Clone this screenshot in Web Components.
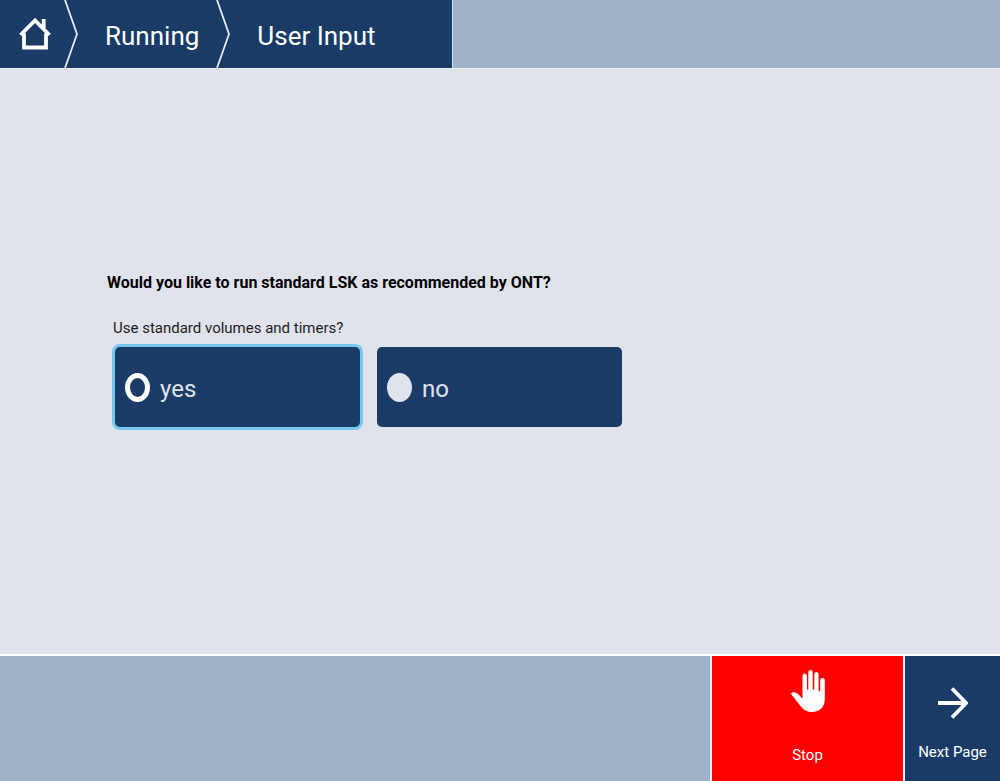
<!DOCTYPE html>
<html lang="en">
<head>
<meta charset="utf-8">
<title>User Input</title>
<style>
  html, body { margin: 0; height: 100%; }
  body { font-family: Roboto, "Noto Sans", sans-serif; }
</style>
</head>
<body>
<run-screen>
  <crumb-bar slot="header">
    <crumb-item home></crumb-item>
    <crumb-item>Running</crumb-item>
    <crumb-item current>User Input</crumb-item>
  </crumb-bar>
  <question-form heading="Would you like to run standard LSK as recommended by ONT?" prompt="Use standard volumes and timers?" options="yes,no" value="yes"></question-form>
  <action-bar slot="footer">
    <action-button kind="stop">Stop</action-button>
    <action-button kind="next">Next Page</action-button>
  </action-bar>
</run-screen>
<script>
  class BaseElement extends HTMLElement {
    connectedCallback() {
      if (this.shadowRoot) return;
      this.attachShadow({ mode: 'open' }).innerHTML = this.render();
    }
  }

  class RunScreen extends BaseElement {
    render() {
      return `<style>
        :host { display: flex; flex-direction: column; min-height: 100vh; background: #e0e3ec;
          --navy: #193b66; --steel: #9eb1c7; --pale: #e0e3ec; }
        main { flex: 1; padding: 202px 24px 24px 107px; }
      </style>
      <slot name="header"></slot><main><slot></slot></main><slot name="footer"></slot>`;
    }
  }

  class CrumbBar extends BaseElement {
    render() {
      return `<style>
        :host { display: block; background: var(--steel); border-bottom: 1px solid #eef1f6; }
        nav { display: inline-flex; vertical-align: top; min-width: 452px; height: 68px; background: var(--navy); border-right: 1px solid #dfe5ee; }
      </style><nav aria-label="Breadcrumb"><slot></slot></nav>`;
    }
  }

  class CrumbItem extends BaseElement {
    render() {
      const home = this.hasAttribute('home');
      const current = this.hasAttribute('current');
      const content = home
        ? `<svg class="home" viewBox="0 0 32 32" role="img" aria-label="Home"><path d="M1.500 17L16 2.500L30.500 17M5 15.500V29.500H27V15.500M24.700 11V1" fill="none" stroke="#fff" stroke-width="3.800"/></svg>`
        : `<slot></slot>`;
      return `<style>
        :host { display: flex; color: #fff; font-size: 26px; line-height: 32px; }
        a { display: flex; align-items: center; padding: 4px 18px 0 28px; color: inherit; text-decoration: none; white-space: nowrap; }
        a.icon { padding: 0 14px 0 19px; }
        .home { width: 32px; height: 32px; display: block; }
        .sep { width: 12px; height: 68px; display: block; overflow: visible; }
      </style>
      <a href="#" class="${home ? 'icon' : ''}" ${current ? 'aria-current="page"' : ''}>${content}</a>
      ${current ? '' : '<svg class="sep" viewBox="0 0 12 68" aria-hidden="true"><path d="M0 0L12 34L0 68" fill="none" stroke="#e8ecf3" stroke-width="1.800"/></svg>'}`;
    }
  }

  class QuestionForm extends BaseElement {
    render() {
      const value = this.getAttribute('value');
      const options = this.getAttribute('options').split(',').map(o =>
        `<label><input type="radio" name="answer" value="${o}" ${o === value ? 'checked' : ''}><span>${o}</span></label>`).join('');
      return `<style>
        :host { display: block; color: #000; }
        h1 { margin: 0 0 22px; font-size: 16px; line-height: 24px; font-weight: 700; }
        fieldset { border: 0; margin: 0; padding: 0 0 0 6px; min-width: 0; }
        legend { padding: 0; font-size: 15px; line-height: 22px; color: #1c1c1e; }
        .options { display: flex; flex-wrap: wrap; gap: 17px; padding: 8px 2px 0; }
        label { display: flex; align-items: center; gap: 10px; box-sizing: border-box; width: 245px; height: 80px; padding: 0 10px;
          border-radius: 5px; background: var(--navy); color: var(--pale); font-size: 24px; line-height: 32px; cursor: pointer; }
        label:has(input:checked) { box-shadow: 0 0 0 3px #76c9ee; }
        input { appearance: none; box-sizing: border-box; flex: none; width: 25px; height: 29px; margin: 0; border-radius: 50%; background: var(--pale); }
        input:checked { background: transparent; border: 5px solid #fff; }
        span { padding-top: 4px; }
      </style>
      <h1>${this.getAttribute('heading')}</h1>
      <fieldset><legend>${this.getAttribute('prompt')}</legend><div class="options">${options}</div></fieldset>`;
    }
  }

  class ActionBar extends BaseElement {
    render() {
      return `<style>
        :host { display: flex; justify-content: flex-end; height: 125px; background: var(--steel); border-top: 2px solid #fff; }
      </style><slot></slot>`;
    }
  }

  class ActionButton extends BaseElement {
    render() {
      const stop = this.getAttribute('kind') === 'stop';
      const icon = stop
        ? `<svg width="34" height="42" viewBox="0 0 34 42" aria-hidden="true"><path fill="#fff" d="M0 24C0 22 4 21.500 7 24L11.500 28.500V6C11.500 2.500 16 2.500 16 6V19.500H17.300V2.500C17.300-.8 21.700-.8 21.700 2.500V19.500H23.300V4.500C23.300 1 27.600 1 27.600 4.500V21H29.200V10.500C29.200 7.300 33.800 7.300 33.800 10.500V29C33.800 37 28.500 42 21 42C15.500 42 12.500 39.500 9.500 36Z"/></svg>`
        : `<svg width="30" height="32" viewBox="0 0 30 32" aria-hidden="true"><path d="M0 16H28M14 1.500L28 16L14 30.500" fill="none" stroke="#fff" stroke-width="3.800"/></svg>`;
      return `<style>
        :host { display: flex; border-left: 2px solid #eef1f6; }
        button { display: flex; flex-direction: column; align-items: center; justify-content: space-between; border: 0; margin: 0; color: #fff;
          font: 15px/22px Roboto, "Noto Sans", sans-serif; white-space: nowrap; cursor: pointer; }
        .stop { width: 191px; padding: 14px 0 15px; background: #f00; }
        .next { width: 95px; padding: 31px 0 18px; background: var(--navy); }
        svg { display: block; flex: none; }
      </style><button type="button" class="${stop ? 'stop' : 'next'}">${icon}<slot></slot></button>`;
    }
  }

  customElements.define('run-screen', RunScreen);
  customElements.define('crumb-bar', CrumbBar);
  customElements.define('crumb-item', CrumbItem);
  customElements.define('question-form', QuestionForm);
  customElements.define('action-bar', ActionBar);
  customElements.define('action-button', ActionButton);
</script>
</body>
</html>
